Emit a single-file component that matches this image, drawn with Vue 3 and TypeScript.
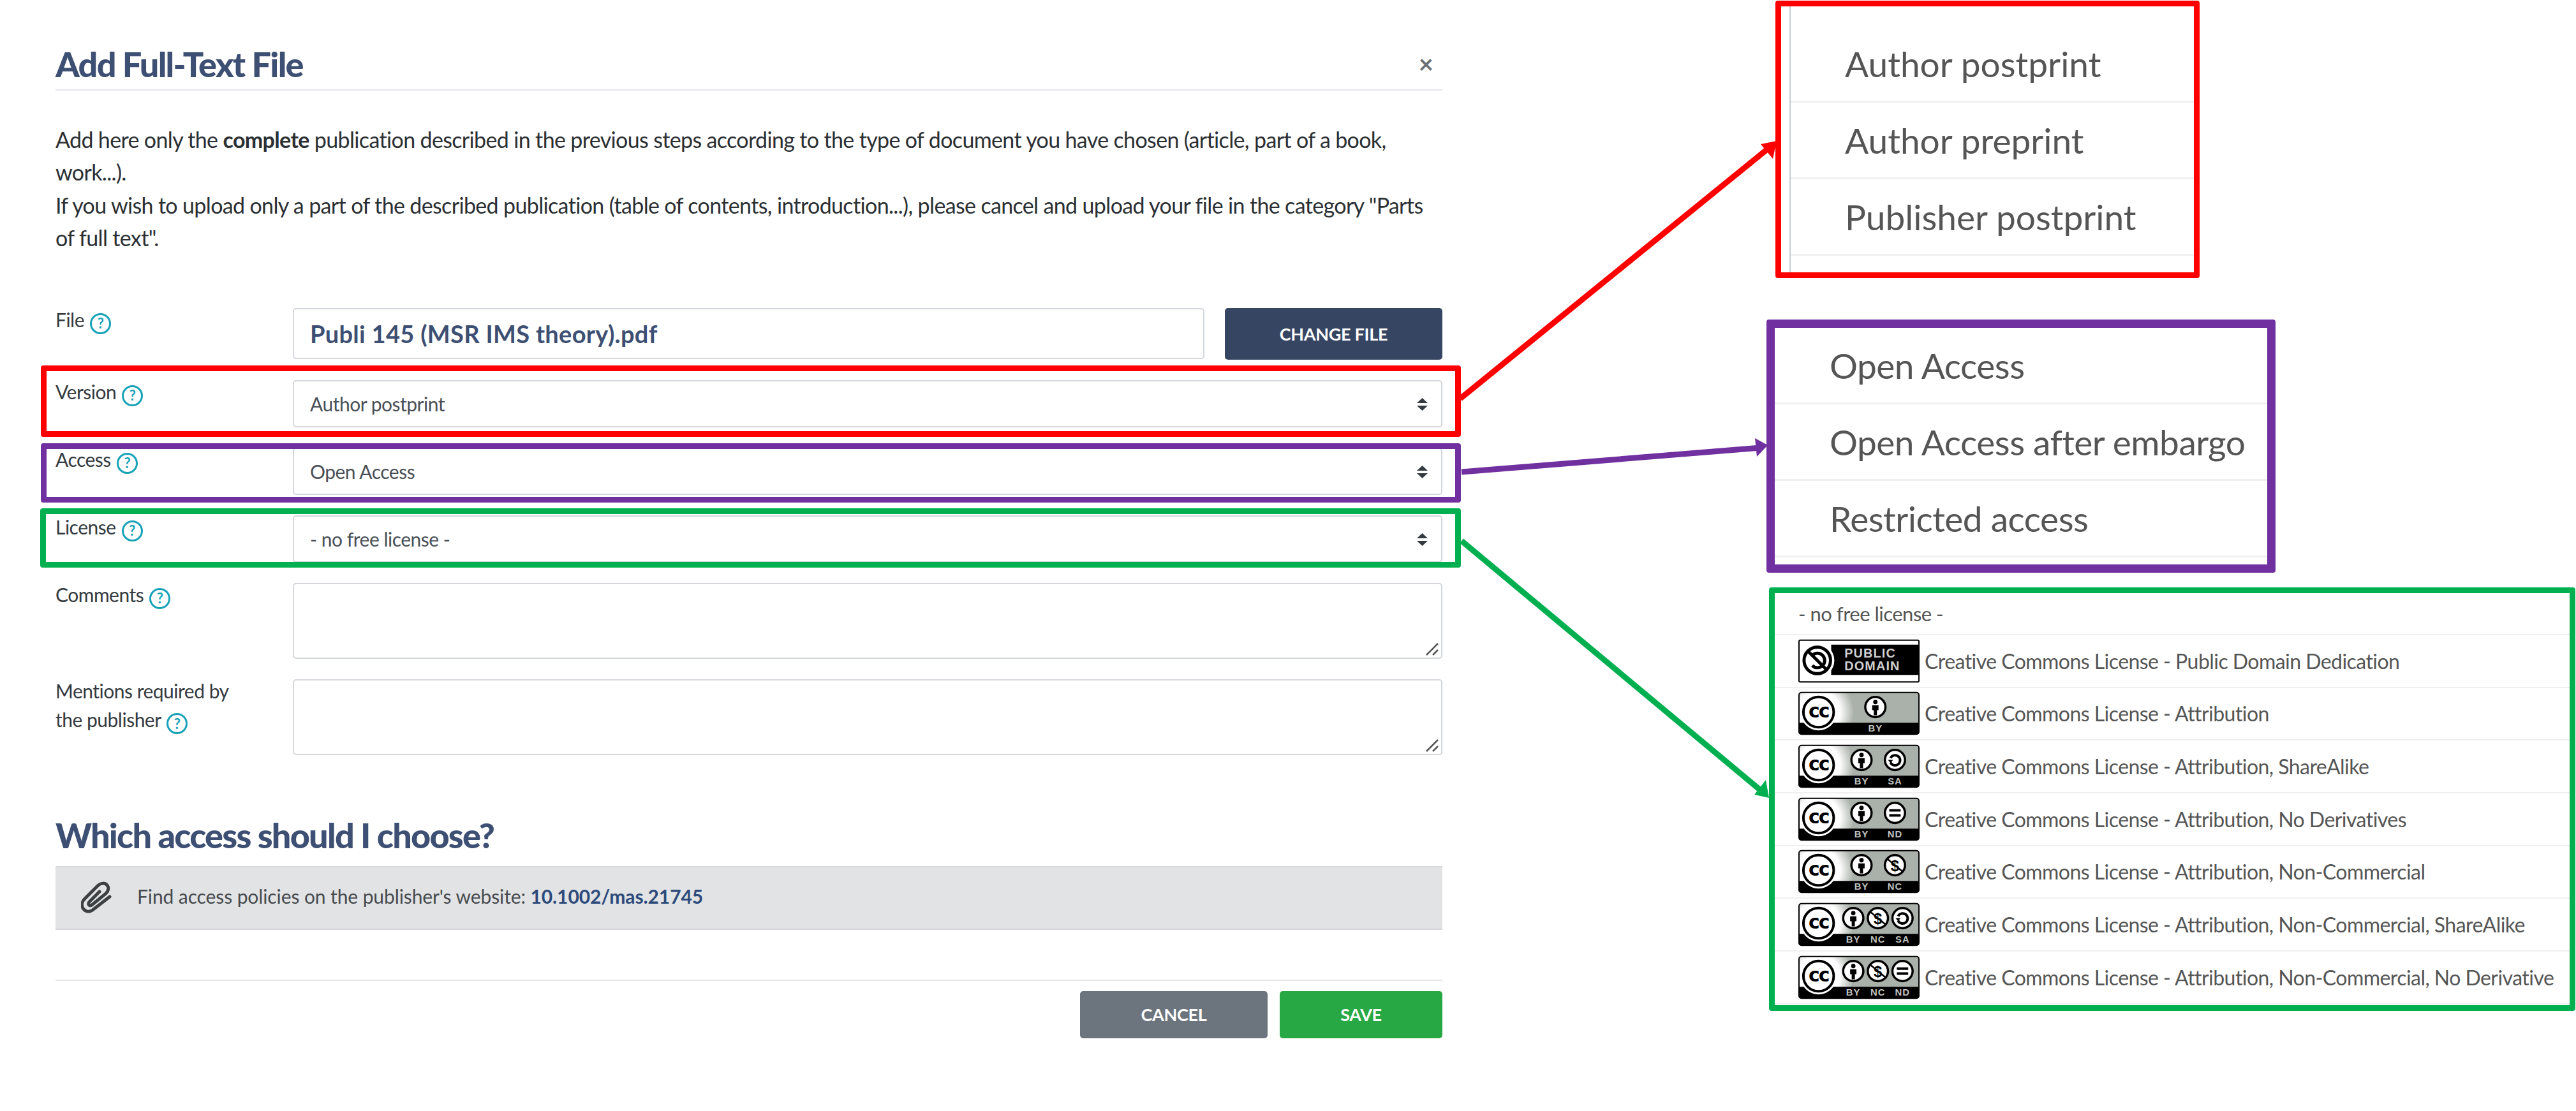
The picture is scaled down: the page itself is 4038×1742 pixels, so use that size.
<template>
  <div class="page">
    <section class="dialog">
      <header class="dialog-header">
        <h2>Add Full-Text File</h2>
        <button class="close-btn">&times;</button>
      </header>

      <p class="intro">
        Add here only the <strong>complete</strong> publication described in the previous steps according to the type of document you have chosen (article, part of a book,<br />
        work...).<br />
        If you wish to upload only a part of the described publication (table of contents, introduction...), please cancel and upload your file in the category "Parts<br />
        of full text".
      </p>

      <form class="form" @submit.prevent>
        <div class="row row-file">
          <label>File <span class="help">?</span></label>
          <div class="file-field">
            <input class="control file-name" type="text" readonly :value="fileName" />
            <button class="btn btn-navy">CHANGE FILE</button>
          </div>
        </div>

        <div v-for="field in selects" :key="field.label" class="row">
          <label>{{ field.label }} <span class="help">?</span></label>
          <div class="select-wrap">
            <select v-model="field.value" class="control select">
              <option v-for="opt in field.options" :key="opt">{{ opt }}</option>
            </select>
            <svg class="select-arrows" viewBox="0 0 17 20">
              <path d="M8.5 0 17 8H0z" />
              <path d="M0 12h17l-8.500 8z" />
            </svg>
          </div>
        </div>

        <div v-for="area in areas" :key="area.id" class="row">
          <label>{{ area.line1 }}<br v-if="area.line2" />{{ area.line2 }} <span class="help">?</span></label>
          <div class="area-wrap">
            <textarea class="control area"></textarea>
            <svg class="grip" viewBox="0 0 20 20">
              <path d="M1 19 19 1M11 19l8-8" />
            </svg>
          </div>
        </div>
      </form>

      <h2 class="section-title">Which access should I choose?</h2>
      <div class="notice">
        <svg class="clip" viewBox="0 0 50 52">
          <path d="M45 24 18 45C12 49 6 47 3 42 0 37 2 31 6 27L26 7C31 2 38 2 41 6 44 10 43 15 39 19L17 37C14 39 11 37 12 34 12 33 13 32 14 31L29 16" />
        </svg>
        <span class="notice-text">Find access policies on the publisher's website: <a>10.1002/mas.21745</a></span>
      </div>

      <footer class="dialog-footer">
        <button class="btn btn-grey">CANCEL</button>
        <button class="btn btn-green">SAVE</button>
      </footer>
    </section>

    <aside class="callouts">
      <ul class="crop crop-red">
        <li v-for="item in versions" :key="item">{{ item }}</li>
      </ul>
      <ul class="crop crop-purple">
        <li v-for="item in accesses" :key="item">{{ item }}</li>
      </ul>
      <ul class="crop crop-green">
        <li class="first">- no free license -</li>
        <li v-for="lic in licenses" :key="lic.text">
          <svg class="badge" viewBox="0 0 192 68">
            <defs>
              <radialGradient id="glow" gradientUnits="userSpaceOnUse" cx="32" cy="32" r="56">
                <stop offset="0.6" stop-color="#ffffff" />
                <stop offset="1" stop-color="#aab1aa" />
              </radialGradient>
            </defs>
            <template v-if="lic.icons.length === 0">
              <rect x="1" y="1" width="190" height="66" rx="2" fill="#fff" stroke="#000" stroke-width="2" />
              <rect x="52" y="8" width="139" height="48" fill="#000" />
              <circle cx="30" cy="33" r="27" fill="#fff" />
              <circle cx="30" cy="33" r="21" fill="#fff" stroke="#000" stroke-width="5" />
              <path d="M22 25A11.500 11.500 0 1 1 22 41" fill="none" stroke="#000" stroke-width="5" />
              <path d="M15 18 45 48" stroke="#000" stroke-width="5" />
              <text class="pd-text" x="73" y="28">PUBLIC</text>
              <text class="pd-text" x="73" y="49">DOMAIN</text>
            </template>
            <template v-else>
              <rect x="1" y="1" width="190" height="66" rx="4" fill="url(#glow)" stroke="#000" stroke-width="2" />
              <path d="M1 49h190v15a3 3 0 0 1-3 3H4a3 3 0 0 1-3-3z" fill="#000" />
              <circle cx="32" cy="32" r="29" fill="#fff" />
              <circle cx="32" cy="32" r="24" fill="#fff" stroke="#000" stroke-width="4" />
              <text class="cc-text" x="32" y="41">cc</text>
              <g v-for="(icon, i) in lic.icons" :key="icon" :transform="`translate(${iconX(lic.icons.length, i)} 24)`">
                <circle r="16" fill="#fff" stroke="#000" stroke-width="3.500" />
                <template v-if="icon === 'by'">
                  <circle cy="-8" r="3.500" fill="#000" />
                  <path d="M-5-3H5V5H2.500V13H-2.500V5H-5z" fill="#000" />
                </template>
                <template v-else-if="icon === 'sa'">
                  <path d="M-7-3A8 8 0 1 1-7 4" fill="none" stroke="#000" stroke-width="4" />
                  <path d="M-11 0H-3L-7 5z" fill="#000" />
                </template>
                <template v-else-if="icon === 'nd'">
                  <path d="M-9-6H9V-2H-9zM-9 2H9V6H-9z" fill="#000" />
                </template>
                <template v-else>
                  <text class="nc-text" y="9">$</text>
                  <path d="M-12-10 12 10" stroke="#000" stroke-width="2.500" />
                </template>
                <text class="icon-label" y="39">{{ labelFor[icon] }}</text>
              </g>
            </template>
          </svg>
          <span>{{ lic.text }}</span>
        </li>
      </ul>
    </aside>

    <!-- annotation layer drawn over the screenshot -->
    <div class="mark mark-red"></div>
    <div class="mark mark-purple"></div>
    <div class="mark mark-green"></div>
    <svg class="arrows" viewBox="0 0 4038 1742">
      <path d="M2289 625 2774 231" stroke="#ff0000" stroke-width="9" />
      <polygon points="2785,221 2760,226 2779,249" fill="#ff0000" />
      <path d="M2291 740 2760 702" stroke="#7030a0" stroke-width="9" />
      <polygon points="2771,698 2751,687 2754,716" fill="#7030a0" />
      <path d="M2291 848 2762 1241" stroke="#00b050" stroke-width="9" />
      <polygon points="2773,1251 2768,1223 2750,1246" fill="#00b050" />
    </svg>
  </div>
</template>

<script setup lang="ts">
import { reactive } from 'vue'

type IconName = 'by' | 'sa' | 'nd' | 'nc'

interface License {
  text: string
  icons: IconName[]
}

const fileName = 'Publi 145 (MSR IMS theory).pdf'

const versions = ['Author postprint', 'Author preprint', 'Publisher postprint']
const accesses = ['Open Access', 'Open Access after embargo', 'Restricted access']

const licenses: License[] = [
  { text: 'Creative Commons License - Public Domain Dedication', icons: [] },
  { text: 'Creative Commons License - Attribution', icons: ['by'] },
  { text: 'Creative Commons License - Attribution, ShareAlike', icons: ['by', 'sa'] },
  { text: 'Creative Commons License - Attribution, No Derivatives', icons: ['by', 'nd'] },
  { text: 'Creative Commons License - Attribution, Non-Commercial', icons: ['by', 'nc'] },
  { text: 'Creative Commons License - Attribution, Non-Commercial, ShareAlike', icons: ['by', 'nc', 'sa'] },
  { text: 'Creative Commons License - Attribution, Non-Commercial, No Derivative', icons: ['by', 'nc', 'nd'] }
]

const selects = reactive([
  { label: 'Version', value: versions[0], options: versions },
  { label: 'Access', value: accesses[0], options: accesses },
  { label: 'License', value: '- no free license -', options: ['- no free license -', ...licenses.map((l) => l.text)] }
])

const areas = [
  { id: 'comments', line1: 'Comments', line2: '' },
  { id: 'mentions', line1: 'Mentions required by', line2: 'the publisher' }
]

const labelFor: Record<IconName, string> = { by: 'BY', sa: 'SA', nd: 'ND', nc: 'NC' }

const iconX = (count: number, index: number) => {
  if (count === 1) return 122
  if (count === 2) return [100, 153][index]
  return [87, 126, 165][index]
}
</script>

<style>
html,
body {
  margin: 0;
  background: #fff;
}
</style>

<style scoped>
.page {
  position: relative;
  display: flex;
  width: 4038px;
  height: 1742px;
  overflow: hidden;
  background: #fff;
  font-family: Lato, "Open Sans", sans-serif;
  color: #2b2f33;
}

.dialog {
  width: 2174px;
  margin-left: 87px;
  padding-top: 60px;
}

.dialog-header {
  display: flex;
  justify-content: space-between;
  align-items: center;
  height: 80px;
  border-bottom: 2px solid #e4e7ea;
}

h2 {
  margin: 0;
  font-size: 54px;
  font-weight: 900;
  letter-spacing: -1.750px;
  color: #3d4f72;
}

.close-btn {
  padding: 0 14px 0 0;
  border: none;
  background: none;
  font-family: inherit;
  font-size: 40px;
  font-weight: 700;
  color: #6b6f73;
}

.intro {
  margin: 51px 0 0;
  font-size: 34px;
  line-height: 51.400px;
  letter-spacing: -0.650px;
  white-space: nowrap;
}

.form {
  display: flex;
  flex-direction: column;
  gap: 32px;
  margin-top: 84px;
}

.row {
  display: grid;
  grid-template-columns: 372px 1fr;
}

.row label {
  margin-top: -4px;
  font-size: 30px;
  line-height: 45.500px;
  letter-spacing: -0.500px;
  color: #343a40;
}

.help {
  display: inline-flex;
  justify-content: center;
  align-items: center;
  box-sizing: border-box;
  width: 33px;
  height: 33px;
  margin-left: 2px;
  border: 3px solid #17a2b8;
  border-radius: 50%;
  font-size: 22px;
  font-weight: 700;
  line-height: 1;
  letter-spacing: 0;
  color: #17a2b8;
  vertical-align: -2.500px;
}

.control {
  display: block;
  box-sizing: border-box;
  width: 100%;
  border: 2px solid #d3d7dc;
  border-radius: 5px;
  background: #fff;
  font-family: inherit;
  outline: none;
}

.file-field {
  display: flex;
  gap: 32px;
}

.file-name {
  flex: 1;
  height: 80px;
  padding: 0 25px;
  font-size: 38px;
  font-weight: 700;
  letter-spacing: 0.300px;
  color: #3d4f72;
}

.select-wrap,
.area-wrap {
  position: relative;
}

.select {
  height: 74px;
  padding: 1px 25px 0;
  appearance: none;
  font-size: 30px;
  letter-spacing: -0.500px;
  color: #495057;
}

.select-arrows {
  position: absolute;
  top: 28px;
  right: 23px;
  width: 17px;
  height: 20px;
  fill: #343a40;
}

.area {
  height: 119px;
  resize: none;
}

.grip {
  position: absolute;
  right: 6px;
  bottom: 5px;
  width: 20px;
  height: 20px;
  fill: none;
  stroke: #555;
  stroke-width: 2.500;
}

.section-title {
  margin-top: 95px;
  line-height: 62px;
}

.notice {
  display: flex;
  align-items: center;
  gap: 38px;
  box-sizing: border-box;
  height: 100px;
  margin-top: 17px;
  padding-left: 40px;
  border-top: 2px solid #d6d8db;
  border-bottom: 2px solid #d6d8db;
  background: #e2e3e5;
}

.clip {
  width: 50px;
  height: 52px;
  fill: none;
  stroke: #3d4043;
  stroke-width: 5;
  stroke-linecap: round;
}

.notice-text {
  padding-bottom: 6px;
  font-size: 30px;
  letter-spacing: -0.100px;
  color: #464a4e;
}

.notice-text a {
  font-weight: 700;
  color: #2c4a7a;
}

.dialog-footer {
  display: flex;
  justify-content: flex-end;
  gap: 19px;
  margin-top: 78px;
  padding-top: 16px;
  border-top: 2px solid #e4e7ea;
}

.btn {
  height: 74px;
  border: none;
  border-radius: 5px;
  font-family: inherit;
  font-size: 27px;
  font-weight: 700;
  letter-spacing: -0.300px;
  color: #fff;
}

.btn-navy {
  width: 341px;
  height: 81px;
  background: #364562;
}

.btn-grey {
  width: 294px;
  background: #6c757d;
}

.btn-green {
  width: 255px;
  background: #28a745;
}

.callouts {
  display: flex;
  flex-direction: column;
  width: 1269px;
  margin-left: 508px;
}

.crop {
  box-sizing: border-box;
  margin: 0;
  padding: 0;
  border-style: solid;
  border-radius: 4px;
  list-style: none;
  font-size: 55px;
  color: #555;
}

.crop li {
  box-sizing: border-box;
  display: flex;
  align-items: center;
  height: 120px;
  border-bottom: 3px solid #f0f0f0;
  white-space: nowrap;
}

.crop-red {
  width: 665px;
  height: 435px;
  margin: 1px 0 0 14px;
  padding: 31px 0 0 0;
  border-width: 9px;
  border-color: #ff0000;
  background: linear-gradient(#c8ccd0, #c8ccd0) 13px 0 / 2px 100% no-repeat;
}

.crop-red li {
  margin-left: 15px;
  padding-left: 85px;
}

.crop-purple {
  width: 798px;
  height: 397px;
  margin-top: 65px;
  padding-top: 0;
  border-width: 13px;
  border-color: #7030a0;
  letter-spacing: -0.500px;
}

.crop-purple li {
  padding-left: 86px;
}

.crop-green {
  width: 1264px;
  height: 664px;
  margin: 23px 0 0 4px;
  border-width: 9px;
  border-color: #00b050;
  font-size: 32px;
  letter-spacing: -0.550px;
}

.crop-green li {
  gap: 8px;
  height: 82.670px;
  padding-left: 37px;
  border-bottom-width: 2px;
}

.crop-green li.first {
  height: 66px;
  font-size: 31px;
  letter-spacing: -0.500px;
}

.badge {
  flex: none;
  width: 190px;
  height: 69px;
}

.pd-text {
  font-family: "Liberation Sans", sans-serif;
  font-size: 20px;
  font-weight: 700;
  letter-spacing: 1.200px;
  fill: #d0d0d0;
}

.cc-text {
  font-family: "DejaVu Sans", sans-serif;
  font-size: 30px;
  font-weight: 700;
  letter-spacing: -2px;
  text-anchor: middle;
  fill: #000;
}

.nc-text {
  font-family: "Liberation Sans", sans-serif;
  font-size: 24px;
  font-weight: 700;
  letter-spacing: 0;
  text-anchor: middle;
  fill: #000;
}

.icon-label {
  font-family: "Liberation Sans", sans-serif;
  font-size: 15px;
  font-weight: 700;
  letter-spacing: 1px;
  text-anchor: middle;
  fill: #c0c4c0;
}

.mark {
  position: absolute;
  box-sizing: border-box;
  left: 64px;
  width: 2226px;
  border-style: solid;
  border-width: 9px;
  border-radius: 4px;
}

.mark-red {
  top: 573px;
  height: 112px;
  border-color: #ff0000;
}

.mark-purple {
  top: 695px;
  height: 93px;
  border-color: #7030a0;
}

.mark-green {
  top: 797px;
  left: 63px;
  width: 2227px;
  height: 93px;
  border-color: #00b050;
}

.arrows {
  position: absolute;
  top: 0;
  left: 0;
  width: 4038px;
  height: 1742px;
  pointer-events: none;
}
</style>
